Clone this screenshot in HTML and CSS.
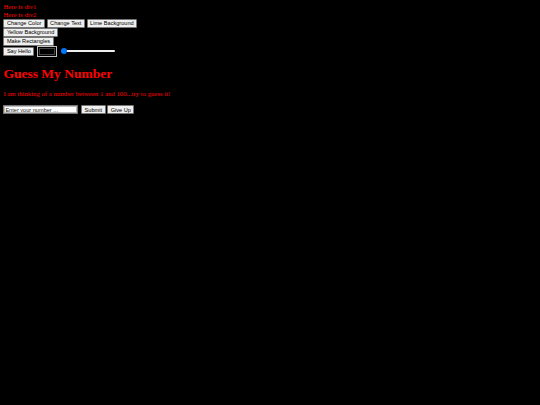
FILE: index.html
```html
<!DOCTYPE html>
<html lang="en">
<head>
    <meta charset="UTF-8">
    <title>Guess My Number</title>
    <link rel="stylesheet" href="styles.css">
</head>
<body>
    <div id="div1" class="note">Here is div1</div>
    <div id="div2" class="note">Here is div2</div>

    <div class="controls">
        <button id="changeColor">Change Color</button>
        <button id="changeText">Change Text</button>
        <button id="limeBg">Lime Background</button>
    </div>
    <div class="controls">
        <button id="yellowBg">Yellow Background</button>
    </div>
    <div class="controls">
        <button id="makeRects">Make Rectangles</button>
    </div>
    <div class="controls">
        <button id="sayHello">Say Hello</button>
        <input type="color" id="colorPick" value="#000000">
        <input type="range" id="sizeSlider" min="0" max="100" value="0">
    </div>

    <h1>Guess My Number</h1>
    <p class="intro">I am thinking of a number between 1 and 100...try to guess it!</p>

    <div class="guess">
        <input type="text" id="guessInput" placeholder="Enter your number ...">
        <button id="submitGuess">Submit</button>
        <button id="giveUp">Give Up</button>
    </div>
</body>
</html>
```

FILE: styles.css
```css
html {
    background-color: #000;
}

body {
    margin: 3.4px;
    font-family: "Liberation Serif", "Times New Roman", serif;
    font-size: 6.75px;
    line-height: 7.8px;
    color: red;
    background-color: #000;
}

.note {
    color: red;
}

button {
    height: 9px;
    font-family: "Liberation Sans", Arial, sans-serif;
    font-size: 5.6px;
    line-height: 6px;
    padding: 0 2.5px;
    margin: 0;
    border: 1px solid #767676;
    border-radius: 1px;
    background-color: #efefef;
    color: #000;
}

.controls {
    line-height: 0;
}

.controls > * {
    vertical-align: middle;
}

input[type="color"] {
    width: 20px;
    height: 11px;
    padding: 1px;
    margin: 0 0 0 1px;
    border: 1px solid #bfbfbf;
    background-color: #000;
}

input[type="color"]::-webkit-color-swatch-wrapper {
    padding: 0;
}

input[type="color"]::-webkit-color-swatch {
    border: 1px solid #444;
}

/* slider drawn by hand so the thumb stays small */
input[type="range"] {
    -webkit-appearance: none;
    appearance: none;
    width: 54px;
    height: 7px;
    margin: 0 0 0 2px;
    background: transparent;
}

input[type="range"]::-webkit-slider-runnable-track {
    height: 2px;
    background-color: #efefef;
    border-radius: 1px;
}

input[type="range"]::-webkit-slider-thumb {
    -webkit-appearance: none;
    width: 6px;
    height: 6px;
    margin-top: -2px;
    border-radius: 50%;
    background-color: #0075ff;
}

h1 {
    font-size: 13.5px;
    line-height: 15.5px;
    margin: 9px 0;
    color: red;
}

.intro {
    margin: 6.75px 0;
    color: red;
}

.guess {
    line-height: 0;
}

.guess > * {
    vertical-align: middle;
}

.guess input[type="text"] {
    box-sizing: border-box;
    width: 75px;
    height: 9px;
    font-family: "Liberation Sans", Arial, sans-serif;
    font-size: 5.6px;
    padding: 0 1px;
    margin: 0 1px 0 0;
    border: 1px solid #767676;
    outline: 1px solid #bdbdbd;
    outline-offset: -2px;
    background-color: #fff;
    color: #000;
}

.guess input::placeholder {
    color: #222;
}
```
